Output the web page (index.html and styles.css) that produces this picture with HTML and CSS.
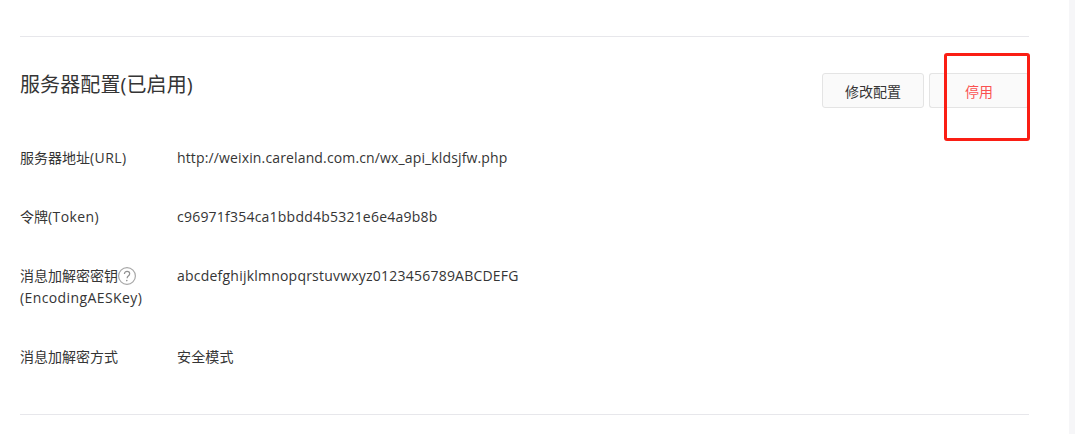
FILE: index.html
```html
<!DOCTYPE html>
<html lang="zh-CN">
<head>
    <meta charset="UTF-8">
    <meta name="viewport" content="width=device-width, initial-scale=1.0">
    <title>服务器配置</title>
    <link rel="stylesheet" href="styles.css">
</head>
<body>
    <div class="container">
        <div class="section">
            <div class="section-head">
                <h2>服务器配置(已启用)</h2>
                <div class="actions">
                    <button class="btn">修改配置</button>
                    <button class="btn btn-danger">停用</button>
                </div>
            </div>

            <div class="row">
                <div class="label">服务器地址<span class="en">(URL)</span></div>
                <div class="value">http://weixin.careland.com.cn/wx_api_kldsjfw.php</div>
            </div>
            <div class="row">
                <div class="label">令牌<span class="en">(Token)</span></div>
                <div class="value value-key">c96971f354ca1bbdd4b5321e6e4a9b8b</div>
            </div>
            <div class="row">
                <div class="label">
                    <span class="label-line">消息加解密密钥<svg class="help" width="18" height="18" viewBox="0 0 18 18"><circle cx="9" cy="9" r="8.4" fill="none" stroke="#a8a8a8" stroke-width="1.2"/><path d="M6.4 7c0-1.6 1.1-2.6 2.7-2.6s2.6 1 2.6 2.3c0 1.1-.6 1.6-1.4 2.2-.8.6-1.1 1-1.1 1.8v.6" fill="none" stroke="#909090" stroke-width="1.2"/><circle cx="8.8" cy="13.6" r=".8" fill="#909090"/></svg></span>
                    <span class="label-line en">(EncodingAESKey)</span>
                </div>
                <div class="value value-key">abcdefghijklmnopqrstuvwxyz0123456789ABCDEFG</div>
            </div>
            <div class="row">
                <div class="label">消息加解密方式</div>
                <div class="value">安全模式</div>
            </div>
        </div>
    </div>

    <div class="mark"></div>
    <div class="scrollbar"></div>
</body>
</html>
```

FILE: styles.css
```css
html, body {
    height: 100%;
}
body {
    font-family: "Open Sans", "Noto Sans CJK SC", sans-serif;
    font-size: 14px;
    line-height: 22px;
    background-color: #fff;
    color: #353535;
    margin: 0;
    overflow: hidden;
}
.container {
    width: 1009px;
    padding: 36px 0 0 20px;
}
.section {
    border-top: 1px solid #e7e7eb;
    border-bottom: 1px solid #e7e7eb;
    padding: 36px 0 9px;
}
.section-head {
    display: flex;
    justify-content: space-between;
    margin-bottom: 39px;
}
.section-head h2 {
    font-size: 20px;
    font-weight: 400;
    line-height: 24px;
    letter-spacing: 0.1px;
    margin: 0;
}
.actions {
    display: flex;
    gap: 5px;
}
.btn {
    font-family: inherit;
    font-size: 14px;
    width: 102px;
    height: 35px;
    padding: 0;
    background-color: #fafafa;
    border: 1px solid #e4e4e4;
    border-radius: 3px;
    color: #353535;
}
.btn-danger {
    width: 100px;
    color: #fa5151;
    border-right-color: transparent;
}
.row {
    display: flex;
    padding-bottom: 37px;
}
.label {
    width: 157px;
    flex-shrink: 0;
}
.label-line {
    display: block;
}
.en {
    letter-spacing: 0.4px;
}
.value {
    letter-spacing: 0.14px;
}
.value-key {
    letter-spacing: 0.22px;
}
.help {
    vertical-align: -4px;
}
.mark {
    position: absolute;
    left: 944px;
    top: 53px;
    width: 80px;
    height: 82px;
    border: 3px solid #fa1e14;
    border-radius: 3px;
}
.scrollbar {
    position: absolute;
    top: 0;
    right: 0;
    bottom: 0;
    width: 6px;
    background-color: #f6f6f8;
}
```
